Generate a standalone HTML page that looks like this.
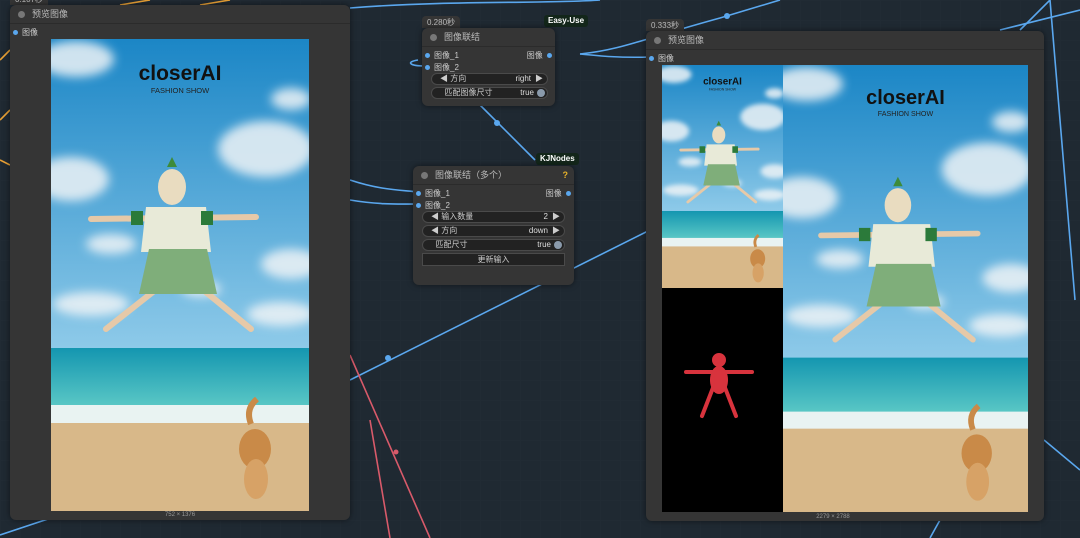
<!DOCTYPE html>
<html><head><meta charset="utf-8"><style>
*{margin:0;padding:0;box-sizing:border-box}
body{width:1080px;height:538px;overflow:hidden;background:#1f2932;font-family:"Liberation Sans","Noto Sans CJK SC",sans-serif;position:relative}
.grid{position:absolute;inset:0;background-image:linear-gradient(#263039 1px,transparent 1px),linear-gradient(90deg,#263039 1px,transparent 1px);background-size:20px 20px;opacity:.35}
.node{position:absolute;background:#353535;border-radius:6px;box-shadow:0 0 6px rgba(0,0,0,.5)}
.hd{height:19px;border-bottom:1px solid #2b2b2b;color:#bbb;font-size:9px;line-height:19px;padding-left:22px;position:relative}
.hd:before{content:"";position:absolute;left:8px;top:6px;width:7px;height:7px;border-radius:50%;background:#777}
.slot{position:absolute;font-size:8px;color:#ccc}
.dot{display:inline-block;width:5px;height:5px;border-radius:50%;background:#5aa7ee;margin-right:4px;vertical-align:middle}
.w{position:absolute;height:12px;border-radius:6px;background:#222;border:1px solid #4a4a4a;font-size:8px;color:#ccc;line-height:10px;padding:0 8px}
.w b{position:absolute;right:16px;font-weight:normal;color:#ddd}
.badge{position:absolute;font-size:8px;color:#bbb;background:#353535;border-radius:4px 4px 0 0;padding:1px 5px;height:12px}
.g{position:absolute;font-size:8px;font-weight:bold;color:#fff;background:#13261a;border-radius:3px;padding:1px 4px;height:12px}
.cap{position:absolute;font-size:6px;color:#999;text-align:center}
</style></head><body>
<div class="grid"></div>
<svg width="1080" height="538" style="position:absolute;left:0;top:0" fill="none" stroke-width="1.6">
<path d="M350 8 C450 0 550 4 600 0" stroke="#5aa7ee"/>
<path d="M580 54 C620 50 640 40 720 18 L780 0" stroke="#5aa7ee"/>
<path d="M580 54 C600 56 620 58 650 57" stroke="#5aa7ee"/>
<path d="M1020 30 L1050 0 M1050 0 L1075 300" stroke="#5aa7ee"/>
<path d="M1000 30 L1080 10" stroke="#5aa7ee"/>
<path d="M480 105 L535 160" stroke="#5aa7ee"/>
<path d="M350 180 C380 190 400 190 418 192" stroke="#5aa7ee"/>
<path d="M350 200 C380 205 400 204 418 204" stroke="#5aa7ee"/>
<path d="M350 380 C450 330 550 280 650 230" stroke="#5aa7ee"/>
<path d="M418 60 C405 62 410 66 425 66" stroke="#5aa7ee"/>
<path d="M0 60 L10 50 M0 160 L10 165 M0 120 L10 110" stroke="#e8a035"/>
<path d="M150 0 L120 5 M230 0 L200 5" stroke="#e8a035"/>
<path d="M350 355 L430 538 M370 420 L390 538" stroke="#d85a6a"/>
<path d="M0 535 L60 515 M1044 440 L1080 470 M930 538 L940 520" stroke="#5aa7ee"/>
<circle cx="388" cy="358" r="3" fill="#5aa7ee"/><circle cx="497" cy="123" r="3" fill="#5aa7ee"/><circle cx="727" cy="16" r="3" fill="#5aa7ee"/><circle cx="396" cy="452" r="2.5" fill="#d85a6a"/>
</svg>
<svg width="0" height="0" style="position:absolute"><defs>
<linearGradient id="sky" x1="0" y1="0" x2="0" y2="1"><stop offset="0" stop-color="#1b86c6"/><stop offset="1" stop-color="#8ecae9"/></linearGradient>
<linearGradient id="sea" x1="0" y1="0" x2="0" y2="1"><stop offset="0" stop-color="#1496b0"/><stop offset="1" stop-color="#5cc9c6"/></linearGradient>
<filter id="bl"><feGaussianBlur stdDeviation="5"/></filter>
<symbol id="ph" viewBox="0 0 258 472" preserveAspectRatio="none">
<rect width="258" height="310" fill="url(#sky)"/>
<g fill="#eef3f6" opacity=".85" filter="url(#bl)"><ellipse cx="25" cy="20" rx="38" ry="18"/><ellipse cx="215" cy="110" rx="48" ry="28"/><ellipse cx="20" cy="140" rx="38" ry="22"/><ellipse cx="60" cy="205" rx="25" ry="10"/><ellipse cx="240" cy="225" rx="30" ry="15"/><ellipse cx="40" cy="265" rx="38" ry="12"/><ellipse cx="230" cy="275" rx="34" ry="12"/><ellipse cx="150" cy="250" rx="20" ry="8"/><ellipse cx="240" cy="60" rx="20" ry="11"/></g>
<rect y="309" width="258" height="60" fill="url(#sea)"/>
<rect y="366" width="258" height="20" fill="#e9f3f2"/>
<rect y="384" width="258" height="88" fill="#d8b889"/>
<text x="129" y="41" font-family="Liberation Sans,sans-serif" font-weight="bold" font-size="21" text-anchor="middle" fill="#111">closerAI</text>
<text x="129" y="54" font-family="Liberation Sans,sans-serif" font-size="7.5" text-anchor="middle" fill="#222">FASHION SHOW</text>
<g stroke="#e6c9a8" stroke-width="6" stroke-linecap="round"><path d="M40 180 L205 178"/><path d="M112 245 L55 290 M145 245 L200 290"/></g>
<path d="M95 168 h60 l5 45 h-70z" fill="#e8ead8"/>
<path d="M98 210 h58 l10 45 h-78z" fill="#7fae7a"/>
<ellipse cx="121" cy="148" rx="14" ry="18" fill="#e9dcc0"/>
<path d="M116 128 l5 -10 l5 10z" fill="#3d8b3a"/>
<rect x="80" y="172" width="12" height="14" fill="#2b7a3a"/><rect x="150" y="172" width="12" height="14" fill="#2b7a3a"/>
<ellipse cx="204" cy="410" rx="16" ry="20" fill="#c98a48"/><ellipse cx="205" cy="440" rx="12" ry="20" fill="#d7a266"/><path d="M200 385 q-6 -15 6 -25" stroke="#c98a48" stroke-width="6" fill="none"/>
</symbol></defs></svg>

<div class="badge" style="left:10px;top:-7px">0.107秒</div>
<div class="node" style="left:10px;top:5px;width:340px;height:515px">
<div class="hd">预览图像</div>
<div class="slot" style="left:3px;top:22px"><span class="dot"></span>图像</div>
</div>
<svg style="position:absolute;left:51px;top:39px" width="258" height="472"><use href="#ph"/></svg>
<div class="cap" style="left:51px;top:512px;width:258px">752 × 1376</div>

<div class="badge" style="left:422px;top:16px">0.280秒</div>
<div class="g" style="left:544px;top:15px">Easy-Use</div>
<div class="node" style="left:422px;top:28px;width:133px;height:78px">
<div class="hd">图像联结</div>
<div class="slot" style="left:3px;top:22px"><span class="dot"></span>图像_1</div>
<div class="slot" style="left:3px;top:34px"><span class="dot"></span>图像_2</div>
<div class="slot" style="right:3px;top:22px">图像 <span class="dot" style="margin:0 0 0 2px"></span></div>
<div class="w" style="left:9px;top:45px;width:117px">◀ 方向<b>right</b><span style="position:absolute;right:4px">▶</span></div>
<div class="w" style="left:9px;top:59px;width:117px">&nbsp;&nbsp;匹配图像尺寸<b style="right:13px">true</b><span style="position:absolute;right:2px;top:1px;width:8px;height:8px;border-radius:50%;background:#8a9aab"></span></div>
</div>

<div class="g" style="left:536px;top:153px">KJNodes</div>
<div class="node" style="left:413px;top:166px;width:161px;height:119px">
<div class="hd">图像联结（多个）<span style="position:absolute;right:6px;color:#e8b32a;font-weight:bold">?</span></div>
<div class="slot" style="left:3px;top:22px"><span class="dot"></span>图像_1</div>
<div class="slot" style="left:3px;top:34px"><span class="dot"></span>图像_2</div>
<div class="slot" style="right:3px;top:22px">图像 <span class="dot" style="margin:0 0 0 2px"></span></div>
<div class="w" style="left:9px;top:45px;width:143px">◀ 输入数量<b>2</b><span style="position:absolute;right:4px">▶</span></div>
<div class="w" style="left:9px;top:59px;width:143px">◀ 方向<b>down</b><span style="position:absolute;right:4px">▶</span></div>
<div class="w" style="left:9px;top:73px;width:143px">&nbsp;&nbsp;匹配尺寸<b style="right:13px">true</b><span style="position:absolute;right:2px;top:1px;width:8px;height:8px;border-radius:50%;background:#8a9aab"></span></div>
<div style="position:absolute;left:9px;top:87px;width:143px;height:13px;background:#222;border:1px solid #4a4a4a;font-size:8px;color:#ccc;text-align:center;line-height:11px">更新输入</div>
</div>

<div class="badge" style="left:646px;top:19px">0.333秒</div>
<div class="node" style="left:646px;top:31px;width:398px;height:490px">
<div class="hd">预览图像</div>
<div class="slot" style="left:3px;top:22px"><span class="dot"></span>图像</div>
</div>
<svg style="position:absolute;left:662px;top:65px" width="121" height="223"><use href="#ph"/></svg>
<div style="position:absolute;left:662px;top:288px;width:121px;height:224px;background:#000"></div>
<svg style="position:absolute;left:680px;top:350px" width="80" height="70"><g stroke="#d8333d" stroke-width="4" stroke-linecap="round" fill="#d8333d"><path d="M6 22 L72 22"/><path d="M36 30 L22 66 M42 30 L56 66"/><ellipse cx="39" cy="30" rx="7" ry="12"/><circle cx="39" cy="10" r="5"/></g></svg>
<svg style="position:absolute;left:783px;top:65px" width="245" height="447"><use href="#ph"/></svg>
<div class="cap" style="left:783px;top:514px;width:100px">2279 × 2788</div>
</body></html>
